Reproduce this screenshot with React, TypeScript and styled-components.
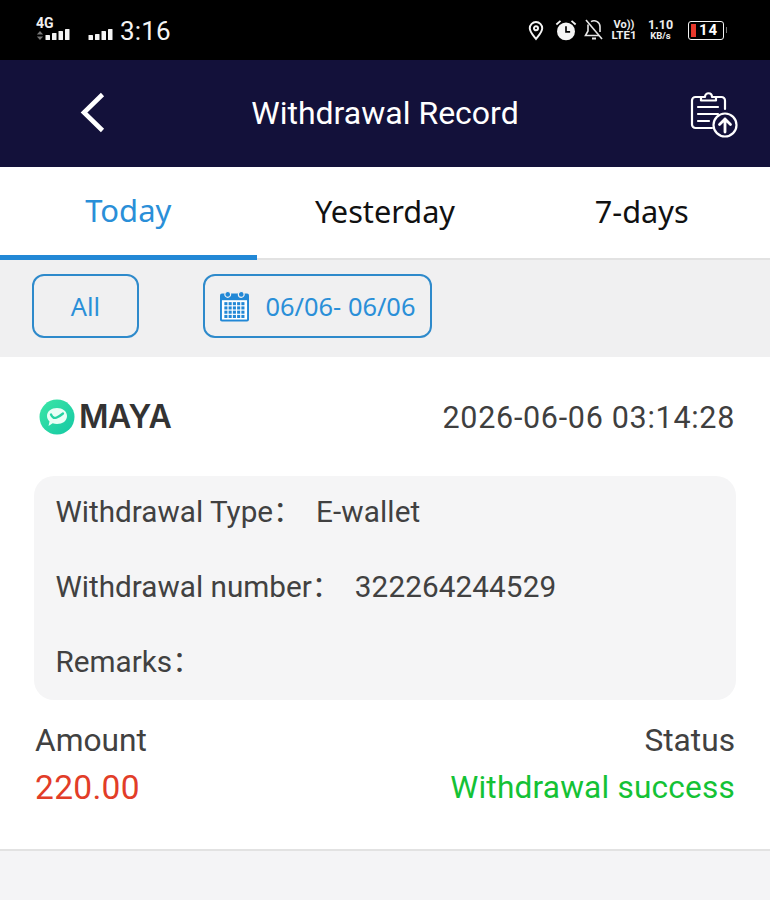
import React from "react";
import styled, { createGlobalStyle } from "styled-components";

const Global = createGlobalStyle`
  html, body { margin: 0; padding: 0; background: #f4f4f6; }
  body { font-family: Roboto, "Noto Sans", sans-serif; }
  * { box-sizing: border-box; }
`;

const Page = styled.div`
  width: 770px;
  height: 900px;
  overflow: hidden;
  display: flex;
  flex-direction: column;
  background: #f4f4f6;
`;

const StatusBar = styled.div`
  height: 60px;
  background: #000;
  color: #fff;
  display: flex;
  align-items: center;
  justify-content: space-between;
  padding: 0 44px 0 36px;
  flex: none;
`;

const StatusGroup = styled.div`
  display: flex;
  align-items: center;
`;

const Clock = styled.span`
  font-size: 26px;
  line-height: 30px;
  margin: 2px 0 0 6px;
  letter-spacing: 0.2px;
  color: #f4f4f4;
`;

const NetStack = styled.div`
  width: 35px;
  height: 25px;
  margin-bottom: 5px;
  display: grid;
  grid-template-columns: 9px auto;
  grid-template-rows: 14px 11px;
`;

const NetLabel = styled.span`
  grid-column: 1 / 3;
  align-self: end;
  font-size: 14px;
  line-height: 11px;
  font-weight: 700;
  color: #f0f0f0;
`;

const NetArrows = styled.svg`
  align-self: end;
`;

const SignalSlot = styled.div`
  display: flex;
  align-self: end;
`;

const NetGap = styled.div`
  width: 17px;
`;

const SecondSignal = styled.div`
  display: flex;
  margin-top: 9px;
`;

const Stacked = styled.div<{ $w: number; $ml: number }>`
  width: ${(p) => p.$w}px;
  margin-left: ${(p) => p.$ml}px;
  display: flex;
  flex-direction: column;
  align-items: center;
  font-weight: 700;
  color: #eee;
`;

const StackLine = styled.div<{ $size: number; $lh: number }>`
  font-size: ${(p) => p.$size}px;
  line-height: ${(p) => p.$lh}px;
  height: ${(p) => p.$lh}px;
  white-space: nowrap;
`;

const Battery = styled.div`
  width: 36px;
  height: 19px;
  margin: 1px 2px 0 15px;
  border: 1.5px solid #f4f4f4;
  border-radius: 3px;
  display: flex;
  align-items: center;
  padding-left: 2px;
  position: relative;
  &::after {
    content: "";
    position: absolute;
    right: -4px;
    top: 5px;
    width: 1.5px;
    height: 6px;
    background: #777;
  }
`;

const BatteryLevel = styled.div`
  width: 5px;
  height: 13px;
  background: #e8392c;
`;

const BatteryText = styled.span`
  font-size: 15px;
  line-height: 15px;
  font-weight: 700;
  margin-left: 3px;
  letter-spacing: 0.8px;
`;

const Header = styled.header`
  height: 107px;
  flex: none;
  background: #13113a;
  display: flex;
  align-items: center;
  justify-content: space-between;
  padding: 0 32px 0 79px;
  color: #fff;
  position: relative;
`;

const HeaderTitle = styled.h1`
  margin: 0 0 2px;
  font-size: 32px;
  font-weight: 400;
  line-height: 36px;
  font-family: Roboto, sans-serif;
  position: absolute;
  left: 0;
  right: 0;
  text-align: center;
  pointer-events: none;
`;

const Tabs = styled.nav`
  height: 93px;
  flex: none;
  display: flex;
  background: #fff;
  border-bottom: 2px solid #e2e2e2;
`;

const Tab = styled.div<{ $active?: boolean }>`
  flex: 1;
  display: flex;
  align-items: center;
  justify-content: center;
  height: 93px;
  padding-bottom: ${(p) => (p.$active ? "3px" : "6px")};
  font-size: ${(p) => (p.$active ? "31px" : "30.7px")};
  font-family: "Noto Sans", sans-serif;
  color: ${(p) => (p.$active ? "#2a8fd8" : "#111")};
  border-bottom: ${(p) => (p.$active ? "5px solid #2288d6" : "none")};
`;

const Filters = styled.div`
  height: 97px;
  flex: none;
  background: #f0f0f1;
  display: flex;
  align-items: flex-start;
  padding: 14px 0 0 32px;
  gap: 64px;
`;

const FilterButton = styled.div<{ $w: number }>`
  width: ${(p) => p.$w}px;
  height: 64px;
  border: 2px solid #2e8acb;
  border-radius: 12px;
  display: flex;
  align-items: center;
  justify-content: center;
  gap: 17px;
  font-family: "Noto Sans", sans-serif;
  font-size: 25.4px;
  color: #2a8fd8;
`;

const Card = styled.section`
  height: 494px;
  flex: none;
  background: #fff;
  border-bottom: 2px solid #e2e2e2;
  padding: 0 35px;
  display: flex;
  flex-direction: column;
`;

const CardTop = styled.div`
  height: 119px;
  flex: none;
  display: flex;
  align-items: center;
  justify-content: space-between;
`;

const Brand = styled.div`
  display: flex;
  align-items: center;
  gap: 4px;
  padding-left: 4px;
`;

const BrandName = styled.span`
  font-size: 32px;
  font-weight: 600;
  color: #333;
  font-family: Inter, "Liberation Sans", sans-serif;
  letter-spacing: -0.4px;
`;

const DateText = styled.span`
  font-size: 30.5px;
  margin-top: 1px;
  color: #3f3f3f;
  letter-spacing: 0.7px;
`;

const InfoBox = styled.div`
  height: 224px;
  flex: none;
  margin: 0 -1px;
  padding: 0 21.5px;
  background: #f5f5f6;
  border-radius: 20px;
  display: flex;
  flex-direction: column;
  justify-content: space-around;
`;

const InfoRow = styled.div`
  display: flex;
  font-size: 29.7px;
  line-height: 38px;
  margin-top: -2px;
  color: #414141;
`;

const InfoColon = styled.span`
  font-family: "Noto Sans CJK SC", sans-serif;
  font-size: 29px;
  line-height: 38px;
  width: 30px;
  margin-top: -3px;
`;

const InfoValue = styled.span<{ $ml: number }>`
  margin-left: ${(p) => p.$ml}px;
  letter-spacing: 0.1px;
`;

const Bottom = styled.div`
  display: grid;
  grid-template-columns: auto auto;
  justify-content: space-between;
  padding-top: 22px;
  row-gap: 8px;
`;

const Caption = styled.div<{ $right?: boolean }>`
  font-size: 31.7px;
  line-height: 38px;
  color: #414141;
  text-align: ${(p) => (p.$right ? "right" : "left")};
`;

const AmountValue = styled.div`
  font-size: 33.5px;
  line-height: 40px;
  color: #e23d28;
  letter-spacing: 0.3px;
`;

const StatusValue = styled.div`
  font-size: 31.6px;
  line-height: 40px;
  color: #14c235;
  text-align: right;
  letter-spacing: 0.2px;
`;

const Signal = ({ heights }: { heights: number[] }) => (
  <svg width={heights.length * 6.5} height="11" viewBox={`0 0 ${heights.length * 6.5} 11`}>
    {heights.map((h, i) => (
      <rect key={i} x={i * 6.5 + 0.5} y={11 - h} width="4.5" height={h} rx="0.6" fill="#f4f4f4" />
    ))}
  </svg>
);

const PinIcon = () => (
  <svg width="16" height="21" viewBox="0 0 18 22" fill="none" stroke="#f4f4f4" strokeWidth="2.2">
    <path d="M9 20.500C5 15.500 2 12.500 2 8.500a7 7 0 0 1 14 0c0 4-3 7-7 12Z" />
    <circle cx="9" cy="8.500" r="2.300" />
  </svg>
);

const AlarmIcon = () => (
  <svg width="22" height="22" viewBox="0 0 24 24" style={{ marginLeft: 11 }}>
    <circle cx="12" cy="13.500" r="9.800" fill="#f4f4f4" />
    <path d="M12 8v6h4.500" fill="none" stroke="#000" strokeWidth="1.800" />
    <path d="M1.500 6 6 2M22.500 6 18 2" stroke="#f4f4f4" strokeWidth="2" fill="none" />
  </svg>
);

const BellOffIcon = () => (
  <svg width="20" height="22" viewBox="0 0 20 22" fill="none" stroke="#e8e8e8" strokeWidth="1.600" style={{ marginLeft: 7 }}>
    <path d="M4 5.500V12L1.500 16.500H15M7 2.600A6 6 0 0 1 16 8v5" />
    <path d="M8 19.500h4" strokeWidth="2" />
    <path d="m2 1 16 19" />
  </svg>
);

const BackIcon = () => (
  <svg width="28" height="44" viewBox="0 0 28 44" fill="none" stroke="#fff" strokeWidth="4.600" strokeLinejoin="miter">
    <path d="M23.500 2.500 5 20.500l18.500 18" />
  </svg>
);

const UploadRecordIcon = () => (
  <svg width="48" height="48" viewBox="0 0 48 48" fill="none" stroke="#fff" strokeWidth="2.200" strokeLinecap="round" strokeLinejoin="round">
    <path d="M11 7H5.500A3.500 3.500 0 0 0 2 10.500v24A3.500 3.500 0 0 0 5.500 38H22" />
    <path d="M26 7h5.500a3.500 3.500 0 0 1 3.500 3.500V19" />
    <path d="M11 10.500V7h4c0-5 7-5 7 0h4v3.500Z" />
    <path d="M8 17h20M8 24h20M8 31h11" />
    <circle cx="35" cy="35" r="11.500" />
    <path d="M35 42V29M29.500 34.500 35 29l5.500 5.500" strokeWidth="2.800" />
  </svg>
);

const CalendarIcon = () => (
  <svg width="29" height="32" viewBox="0 0 30 32">
    <path d="M2 3h26a2 2 0 0 1 2 2v25a2 2 0 0 1-2 2H2a2 2 0 0 1-2-2V5a2 2 0 0 1 2-2Z" fill="#2288d6" />
    <rect x="2" y="10" width="26" height="20" fill="#fff" />
    <circle cx="8" cy="4" r="3" fill="#2288d6" stroke="#f0f0f1" strokeWidth="1.200" />
    <circle cx="22" cy="4" r="3" fill="#2288d6" stroke="#f0f0f1" strokeWidth="1.200" />
    {[0, 1, 2, 3].map((r) =>
      [0, 1, 2, 3, 4].map((c) => (
        <rect key={`${r}${c}`} x={4.500 + c * 4.400} y={12 + r * 4.400} width="3.200" height="3.200" fill="#2288d6" />
      ))
    )}
  </svg>
);

const MayaLogo = () => (
  <svg width="36" height="36" viewBox="0 0 36 36">
    <defs>
      <linearGradient id="maya" x1="0" y1="0" x2="1" y2="1">
        <stop offset="0" stopColor="#3ce6a6" />
        <stop offset="1" stopColor="#14c8a4" />
      </linearGradient>
    </defs>
    <circle cx="18" cy="18" r="17.500" fill="url(#maya)" />
    <path d="M8 17c0-5 4.500-8 10-8s10 3 10 8-4.500 8-10 8c-1.500 0-3-.2-4.300-.7L9.500 27l1-4.500C9 21 8 19.200 8 17Z" fill="#eafff6" />
    <path d="M12 15.500c1.500 3.300 3.500 4 5.700 3 2.200-1 4.300-2.300 6.300-4" fill="none" stroke="#25d3a2" strokeWidth="2.300" strokeLinecap="round" />
  </svg>
);

export default function App() {
  return (
    <Page>
      <Global />
      <StatusBar>
        <StatusGroup>
          <NetStack>
            <NetLabel>4G</NetLabel>
            <NetArrows width="8" height="9" viewBox="0 0 8 10">
              <path d="M4 0 7.500 4H.5ZM.5 6h7L4 10Z" fill="#777" />
            </NetArrows>
            <SignalSlot>
              <Signal heights={[5, 7, 9, 11]} />
            </SignalSlot>
          </NetStack>
          <NetGap />
          <SecondSignal>
            <Signal heights={[5, 6, 9, 11]} />
          </SecondSignal>
          <Clock>3:16</Clock>
        </StatusGroup>
        <StatusGroup>
          <PinIcon />
          <AlarmIcon />
          <BellOffIcon />
          <Stacked $w={26} $ml={7}>
            <StackLine $size={11} $lh={10}>Vo))</StackLine>
            <StackLine $size={11.5} $lh={11}>LTE1</StackLine>
          </Stacked>
          <Stacked $w={25} $ml={11}>
            <StackLine $size={12.5} $lh={12}>1.10</StackLine>
            <StackLine $size={9.5} $lh={10}>KB/s</StackLine>
          </Stacked>
          <Battery>
            <BatteryLevel />
            <BatteryText>14</BatteryText>
          </Battery>
        </StatusGroup>
      </StatusBar>
      <Header>
        <BackIcon />
        <HeaderTitle>Withdrawal Record</HeaderTitle>
        <UploadRecordIcon />
      </Header>
      <Tabs>
        <Tab $active>Today</Tab>
        <Tab>Yesterday</Tab>
        <Tab>7-days</Tab>
      </Tabs>
      <Filters>
        <FilterButton $w={107}>All</FilterButton>
        <FilterButton $w={229}>
          <CalendarIcon />
          06/06- 06/06
        </FilterButton>
      </Filters>
      <Card>
        <CardTop>
          <Brand>
            <MayaLogo />
            <BrandName>MAYA</BrandName>
          </Brand>
          <DateText>2026-06-06 03:14:28</DateText>
        </CardTop>
        <InfoBox>
          <InfoRow>
            <span>Withdrawal Type</span>
            <InfoColon>：</InfoColon>
            <InfoValue $ml={13}>E-wallet</InfoValue>
          </InfoRow>
          <InfoRow>
            <span>Withdrawal number</span>
            <InfoColon>：</InfoColon>
            <InfoValue $ml={13}>322264244529</InfoValue>
          </InfoRow>
          <InfoRow>
            <span>Remarks</span>
            <InfoColon>：</InfoColon>
          </InfoRow>
        </InfoBox>
        <Bottom>
          <Caption>Amount</Caption>
          <Caption $right>Status</Caption>
          <AmountValue>220.00</AmountValue>
          <StatusValue>Withdrawal success</StatusValue>
        </Bottom>
      </Card>
    </Page>
  );
}
